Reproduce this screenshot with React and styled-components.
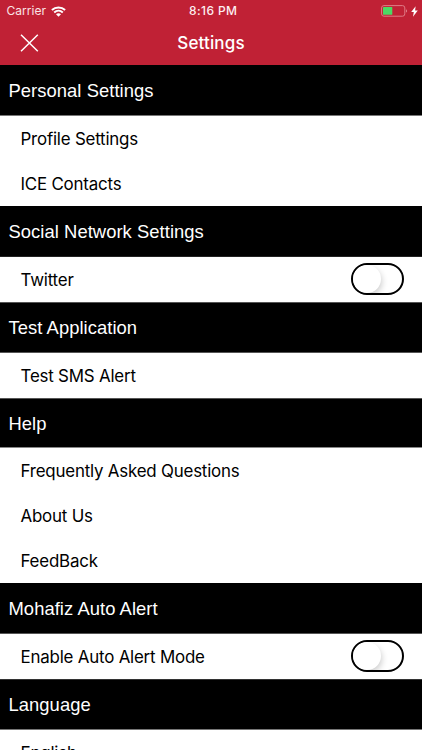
import React, { useState } from "react";
import styled, { createGlobalStyle } from "styled-components";

const GlobalStyle = createGlobalStyle`
  * {
    box-sizing: border-box;
  }
  body {
    margin: 0;
    overflow: hidden;
    background: #fff;
  }
`;

const Screen = styled.div`
  width: 100%;
  height: 750px;
  overflow: hidden;
  background: #fff;
  font-family: Inter, "Liberation Sans", sans-serif;
`;

const TopArea = styled.header`
  height: 65.24px;
  background: #c02135;
  color: #fff;
`;

const StatusBar = styled.div`
  height: 21px;
  display: grid;
  grid-template-columns: 1fr auto 1fr;
  align-items: center;
  padding: 1px 4px 0 6.5px;
  font-size: 12px;
  line-height: 20px;
`;

const StatusSide = styled.div`
  display: flex;
  align-items: center;
  justify-content: ${({ $end }) => ($end ? "flex-end" : "flex-start")};
  gap: ${({ $end }) => ($end ? "3px" : "5px")};
  color: #fbe3e6;
  letter-spacing: 0.05px;

  svg {
    display: block;
  }
`;

const Clock = styled.span`
  font-weight: 500;
  letter-spacing: 0.4px;
  color: #fdeef0;
  padding-left: 2px;
`;

const NavBar = styled.div`
  height: 44px;
  display: grid;
  grid-template-columns: 60px 1fr 60px;
  align-items: center;
`;

const CloseButton = styled.button`
  display: flex;
  padding: 0 0 0 20px;
  border: 0;
  background: none;
  color: #fff;
`;

const Title = styled.h1`
  margin: 0;
  text-align: center;
  font-size: 17px;
  font-weight: 500;
  letter-spacing: 0.15px;
  line-height: 24px;
  color: #fff;
`;

const SectionHeader = styled.h2`
  height: 50.97px;
  margin: 0;
  padding: 1.4px 8.5px 0;
  display: flex;
  align-items: center;
  background: #000;
  border-top: 1px solid ${({ $top }) => $top || "#000"};
  border-bottom: 1px solid ${({ $bottom }) => $bottom || "#000"};
  color: #fff;
  font-family: "Liberation Sans", Arial, sans-serif;
  font-size: 18.4px;
  font-weight: 400;
  letter-spacing: 0.05px;
`;

const Row = styled.div`
  height: 44.85px;
  padding: 2px 18px 0 20.5px;
  display: flex;
  align-items: center;
  justify-content: space-between;
  color: #000;
  font-size: 16.9px;
  letter-spacing: -0.2px;
  line-height: 21px;
  white-space: nowrap;
`;

const Switch = styled.button`
  width: 53px;
  height: 32px;
  margin-top: -2px;
  padding: 0;
  border: 2px solid #000;
  border-radius: 16px;
  background: #fff;
  overflow: hidden;
`;

const Knob = styled.span`
  display: block;
  width: 28px;
  height: 28px;
  border-radius: 50%;
  background: #fff;
  box-shadow: 1px 3px 6px rgba(0, 0, 0, 0.2);
  transform: translateX(${({ $on }) => ($on ? "21px" : "0")});
`;

const sections = [
  {
    title: "Personal Settings",
    bottom: "#777",
    items: [{ label: "Profile Settings" }, { label: "ICE Contacts" }],
  },
  {
    title: "Social Network Settings",
    bottom: "#222",
    items: [{ label: "Twitter", toggle: true }],
  },
  {
    title: "Test Application",
    top: "#555",
    bottom: "#555",
    items: [{ label: "Test SMS Alert" }],
  },
  {
    title: "Help",
    top: "#555",
    bottom: "#888",
    items: [
      { label: "Frequently Asked Questions" },
      { label: "About Us" },
      { label: "FeedBack" },
    ],
  },
  {
    title: "Mohafiz Auto Alert",
    bottom: "#555",
    items: [{ label: "Enable Auto Alert Mode", toggle: true }],
  },
  {
    title: "Language",
    top: "#333",
    bottom: "#777",
    items: [{ label: "English" }],
  },
];

const WifiIcon = () => (
  <svg width="15" height="11" viewBox="0 0 15 11" fill="none" stroke="#fff">
    <path d="M.9 4C4.6 .6 10.4 .6 14.1 4" strokeWidth="2" />
    <path d="M3.2 6.5C5.7 4.2 9.3 4.2 11.8 6.5" strokeWidth="1.9" />
    <path d="M5 8.3C6.5 7 8.5 7 10 8.3L7.5 10.8Z" fill="#fff" stroke="none" />
  </svg>
);

const BatteryIcon = () => (
  <svg width="27" height="12" viewBox="0 0 27 12" fill="none">
    <rect x=".6" y=".6" width="23.2" height="10.6" rx="2.3" stroke="#df7c87" strokeWidth="1" />
    <rect x="2" y="2" width="9.3" height="7.8" rx=".6" fill="#4cd964" />
    <path d="M25 4.2C26.5 4.7 26.5 7.1 25 7.6Z" fill="#df7c87" />
  </svg>
);

const BoltIcon = () => (
  <svg width="7" height="11" viewBox="0 0 7 11" fill="#fff">
    <path d="M4.6 .2L.2 6.1H2.8L2 10.8L6.8 4.6H4.1Z" />
  </svg>
);

const CloseIcon = () => (
  <svg width="19" height="19" viewBox="0 0 19 19" stroke="#fff" strokeWidth="1.5">
    <path d="M1 .7L17.8 17.3M17.8 .7L1 17.3" />
  </svg>
);

const Toggle = ({ label }) => {
  const [on, setOn] = useState(false);
  return (
    <Switch role="switch" aria-label={label} aria-checked={on} onClick={() => setOn(!on)}>
      <Knob $on={on} />
    </Switch>
  );
};

const App = () => {
  return (
    <Screen>
      <GlobalStyle />
      <TopArea>
        <StatusBar>
          <StatusSide>
            <span>Carrier</span>
            <WifiIcon />
          </StatusSide>
          <Clock>8:16 PM</Clock>
          <StatusSide $end>
            <BatteryIcon />
            <BoltIcon />
          </StatusSide>
        </StatusBar>
        <NavBar>
          <CloseButton aria-label="Close">
            <CloseIcon />
          </CloseButton>
          <Title>Settings</Title>
        </NavBar>
      </TopArea>
      {sections.map((section) => (
        <section key={section.title}>
          <SectionHeader $top={section.top} $bottom={section.bottom}>
            {section.title}
          </SectionHeader>
          {section.items.map((item) => (
            <Row key={item.label}>
              <span>{item.label}</span>
              {item.toggle && <Toggle label={item.label} />}
            </Row>
          ))}
        </section>
      ))}
    </Screen>
  );
};

export default App;
